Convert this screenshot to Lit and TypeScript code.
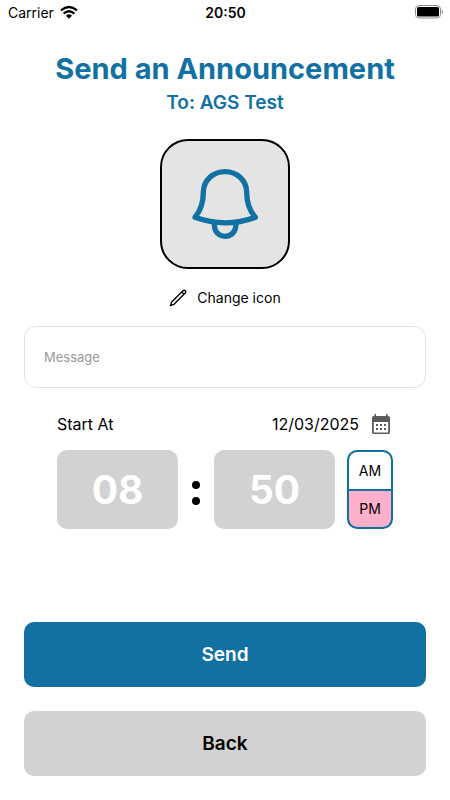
import { LitElement, html, css } from "lit";
import { customElement, state } from "lit/decorators.js";

@customElement("status-bar")
class StatusBar extends LitElement {
  static styles = css`
    :host {
      display: grid;
      grid-template-columns: 1fr auto 1fr;
      align-items: center;
      height: 24px;
      padding: 0 7px 0 8px;
      font-size: 14px;
      color: #000;
    }
    .carrier {
      display: flex;
      align-items: center;
      gap: 6px;
    }
    .time {
      font-weight: 600;
    }
    .battery {
      justify-self: end;
    }
    svg {
      display: block;
    }
  `;

  render() {
    return html`
      <div class="carrier">
        <span>Carrier</span>
        <svg width="18" height="14" viewBox="0 0 54 42" aria-label="Wi-Fi">
          <path d="M27 41 L18 32 Q27 24 36 32 Z" fill="#000" />
          <path d="M11 26 Q27 12 43 26" fill="none" stroke="#000" stroke-width="7" />
          <path d="M3 16 Q27 -4 51 16" fill="none" stroke="#000" stroke-width="7" />
        </svg>
      </div>
      <span class="time">20:50</span>
      <svg class="battery" width="28" height="14" viewBox="0 0 28 14" aria-label="Battery full">
        <rect x="0.5" y="0.5" width="25" height="12.5" rx="3.5" fill="#fff" stroke="#8c8c8c" />
        <rect x="2" y="2" width="22" height="9.5" rx="1.5" fill="#000" />
        <path d="M27 5 Q28.4 6.7 27 8.6 Z" fill="#8c8c8c" stroke="#8c8c8c" stroke-width="0.6" />
      </svg>
    `;
  }
}

@customElement("app-root")
class AppRoot extends LitElement {
  static styles = css`
    :host {
      display: flex;
      flex-direction: column;
      box-sizing: border-box;
      min-height: 100vh;
      background: #fff;
      color: #000;
      font-family: Inter, "Liberation Sans", sans-serif;
    }
    * {
      box-sizing: border-box;
    }
    button,
    input {
      font: inherit;
      color: inherit;
      margin: 0;
    }
    button {
      border: 0;
      padding: 0;
      background: none;
      cursor: pointer;
    }
    svg {
      display: block;
    }
    form {
      flex: 1;
      display: flex;
      flex-direction: column;
      padding: 24px;
    }
    header {
      padding-top: 1px;
      text-align: center;
      color: #1271a3;
    }
    h1,
    h2 {
      margin: 0;
    }
    h1 {
      font-size: 29px;
      font-weight: 700;
      line-height: 40px;
    }
    h2 {
      font-size: 19px;
      font-weight: 600;
      line-height: 28px;
    }
    .picker {
      align-self: center;
      display: flex;
      flex-direction: column;
      align-items: center;
      margin-top: 22px;
      font-size: 14px;
    }
    .tile {
      display: grid;
      place-items: center;
      width: 130px;
      height: 130px;
      border: 2px solid #000;
      border-radius: 28px;
      background: #e4e4e4;
    }
    .change {
      display: flex;
      align-items: center;
      gap: 10px;
      height: 57px;
    }
    .message {
      width: 100%;
      height: 62px;
      padding: 0 19px;
      border: 1px solid #e2e2e2;
      border-radius: 12px;
      background: #fff;
      font-size: 13px;
    }
    .message::placeholder {
      color: #999;
      opacity: 1;
    }
    .schedule {
      margin-top: 24px;
      padding: 0 33px;
    }
    .start {
      display: flex;
      align-items: center;
      justify-content: space-between;
      height: 24px;
      font-size: 16px;
    }
    .date {
      display: flex;
      align-items: center;
      gap: 10px;
    }
    .clock {
      display: grid;
      grid-template-columns: 1fr 36px 1fr 12px 46px;
      height: 79px;
      margin-top: 14px;
    }
    .digits {
      width: 100%;
      height: 100%;
      padding: 0;
      border: 0;
      border-radius: 10px;
      background: #d2d2d2;
      color: #fff;
      font-size: 39px;
      font-weight: 700;
      text-align: center;
    }
    .colon {
      display: flex;
      flex-direction: column;
      align-items: center;
      justify-content: center;
      gap: 8px;
      padding-top: 7px;
    }
    .dot {
      width: 8px;
      height: 8px;
      border-radius: 50%;
      background: #000;
    }
    .period {
      grid-column: 5;
      display: grid;
      grid-template-rows: 1fr 1fr;
      gap: 2px;
      border: 2px solid #1271a3;
      border-radius: 10px;
      background: #1271a3;
      overflow: hidden;
      font-size: 14px;
    }
    .option {
      position: relative;
      display: grid;
      place-items: center;
      background: #fff;
      cursor: pointer;
    }
    .option:first-child {
      border-radius: 8px 8px 0 0;
    }
    .option:last-child {
      border-radius: 0 0 8px 8px;
    }
    .option:has(input:checked) {
      background: #ffb0cc;
    }
    .option input {
      position: absolute;
      inset: 0;
      opacity: 0;
      cursor: pointer;
    }
    .actions {
      display: grid;
      gap: 24px;
      margin-top: auto;
      padding-top: 24px;
    }
    .action {
      height: 65px;
      border-radius: 10px;
      background: #d2d2d2;
      font-size: 19px;
      font-weight: 600;
    }
    .primary {
      background: #1271a3;
      color: #fff;
    }
  `;

  @state() private period = "PM";

  private option(value: string) {
    return html`
      <label class="option">
        <input
          type="radio"
          name="period"
          .value=${value}
          .checked=${this.period === value}
          @change=${() => (this.period = value)}
        />
        <span>${value}</span>
      </label>
    `;
  }

  render() {
    return html`
      <status-bar></status-bar>
      <form @submit=${(e: Event) => e.preventDefault()}>
        <header>
          <h1>Send an Announcement</h1>
          <h2>To: AGS Test</h2>
        </header>

        <div class="picker">
          <div class="tile">
            <svg width="72" height="76" viewBox="117 108 216 228" fill="none" stroke="#1271a3" stroke-width="16" stroke-linejoin="round" stroke-linecap="round" aria-hidden="true">
              <path d="M135 262 C151 243 160 222 160 187 C160 151 189 125 225 125 C261 125 290 151 290 187 C290 222 299 243 316 262 C256 284 195 284 135 262 Z" />
              <path d="M193 283 C193 305 206 319 225 319 C244 319 258 305 258 283" />
            </svg>
          </div>
          <button class="change" type="button">
            <svg width="18" height="18" viewBox="0 0 54 54" fill="none" stroke="#000" stroke-width="4" stroke-linejoin="round" aria-hidden="true">
              <path d="M4 50 L8 39 L41 6 Q45 2 49 5 Q52 9 48 13 L15 46 Z" />
              <path d="M38 9 L45 16" />
            </svg>
            <span>Change icon</span>
          </button>
        </div>

        <input class="message" type="text" aria-label="Message" placeholder="Message" />

        <section class="schedule">
          <div class="start">
            <span>Start At</span>
            <button class="date" type="button">
              <span>12/03/2025</span>
              <svg width="24" height="24" viewBox="0 0 24 24" aria-hidden="true">
                <path fill="#5c5c5c" fill-rule="evenodd" d="M5.500 2h1.500v2h10V2h1.500v2h.7c1 0 1.800.8 1.800 1.800V20.200c0 1-.8 1.800-1.800 1.800H4.800c-1 0-1.800-.8-1.800-1.800V5.800C3 4.800 3.800 4 4.800 4h.7zM4.800 10v10.400h14.400V10z" />
                <path fill="#5c5c5c" d="M7 12h2v2H7zm4 0h2v2h-2zm4 0h2v2h-2zM7 16h2v2H7zm4 0h2v2h-2zm4 0h2v2h-2z" />
              </svg>
            </button>
          </div>
          <div class="clock">
            <input class="digits" type="text" inputmode="numeric" maxlength="2" aria-label="Hour" value="08" />
            <div class="colon"><span class="dot"></span><span class="dot"></span></div>
            <input class="digits" type="text" inputmode="numeric" maxlength="2" aria-label="Minute" value="50" />
            <div class="period" role="radiogroup" aria-label="Period">
              ${this.option("AM")} ${this.option("PM")}
            </div>
          </div>
        </section>

        <div class="actions">
          <button class="action primary" type="submit">Send</button>
          <button class="action" type="button">Back</button>
        </div>
      </form>
    `;
  }
}
